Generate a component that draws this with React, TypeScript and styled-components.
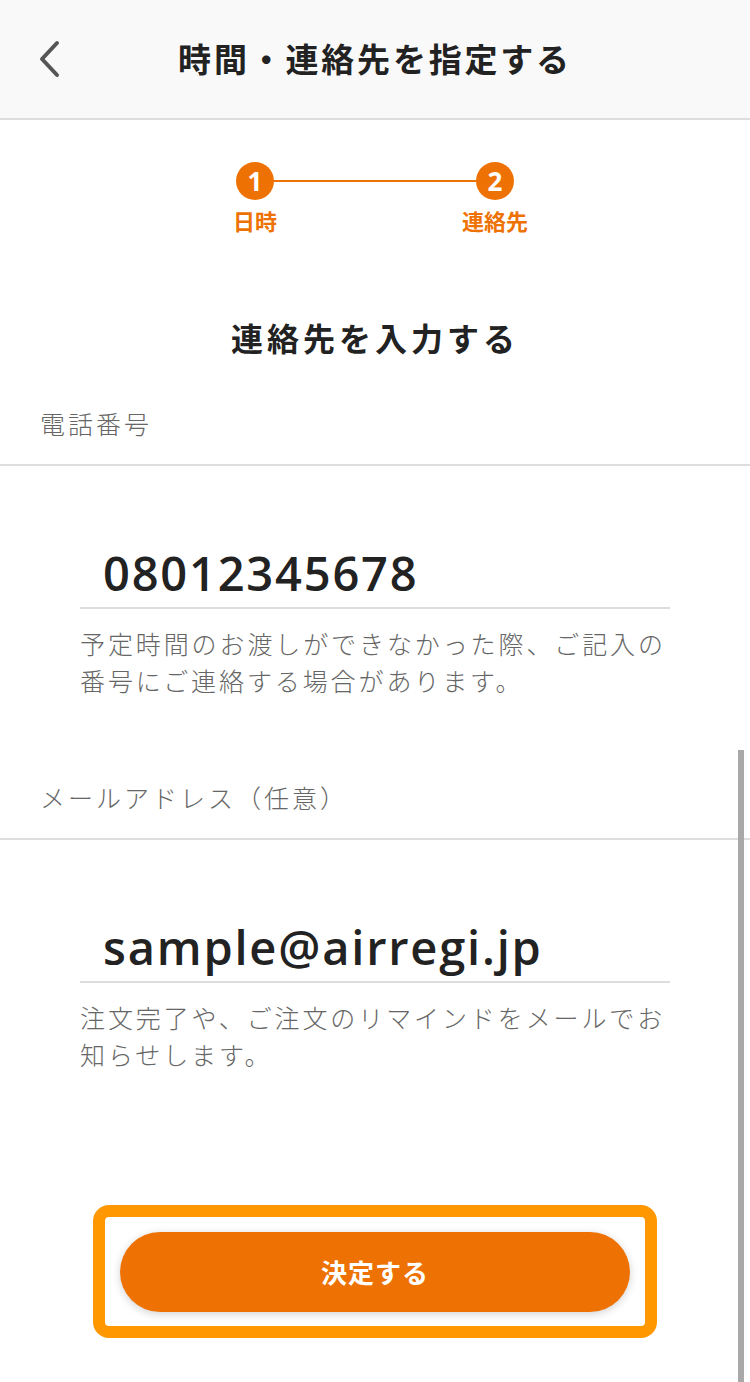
import styled, { createGlobalStyle } from 'styled-components';

const colors = {
	orange: '#ee7203',
	highlight: '#ff9800',
	text: '#222222',
	grey: '#666666',
	line: '#dddddd',
	headerBg: '#f9f9f9',
	white: '#ffffff',
};

const GlobalStyle = createGlobalStyle`
	html, body {
		margin: 0;
		padding: 0;
		background: ${colors.white};
	}
	body {
		font-family: 'Noto Sans', 'Noto Sans CJK JP', sans-serif;
	}
`;

const Page = styled.div`
	position: relative;
	display: flex;
	flex-direction: column;
	width: 750px;
	height: 1382px;
	overflow: hidden;
	background: ${colors.white};
`;

const Header = styled.header`
	display: grid;
	grid-template-columns: 100px 1fr 100px;
	align-items: center;
	height: 118px;
	background: ${colors.headerBg};
	border-bottom: 2px solid ${colors.line};
`;

const BackButton = styled.button`
	display: flex;
	align-items: center;
	justify-content: flex-start;
	padding: 0 0 0 36px;
	height: 100%;
	background: none;
	border: none;
`;

const HeaderTitle = styled.h1`
	margin: 0;
	text-align: center;
	color: ${colors.text};
	font-size: 33px;
	font-weight: 700;
	letter-spacing: 2.8px;
	line-height: 1;
`;

const Stepper = styled.div`
	display: grid;
	grid-template-columns: 80px 160px 80px;
	justify-content: center;
	justify-items: center;
	padding-top: 42px;
`;

const StepCircle = styled.div`
	display: flex;
	align-items: center;
	justify-content: center;
	width: 38px;
	height: 38px;
	border-radius: 50%;
	background: ${colors.orange};
	color: ${colors.white};
	font-size: 26px;
	font-weight: 700;
	font-family: 'Open Sans', 'Noto Sans', sans-serif;
`;

const StepLine = styled.div`
	align-self: center;
	width: calc(100% + 44px);
	height: 2px;
	background: ${colors.orange};
`;

const StepLabel = styled.span`
	margin-top: 8px;
	color: ${colors.orange};
	font-size: 22px;
	font-weight: 700;
	line-height: 26px;
	white-space: nowrap;
`;

const Heading = styled.h2`
	margin: 81px 0 0;
	text-align: center;
	color: ${colors.text};
	font-size: 32px;
	font-weight: 700;
	letter-spacing: 4px;
	line-height: 48px;
`;

const FieldLabel = styled.div<{ $top: number }>`
	padding: ${(p) => p.$top}px 40px 22px;
	border-bottom: 2px solid ${colors.line};
	color: ${colors.grey};
	font-size: 25px;
	font-weight: 300;
	letter-spacing: 3px;
	line-height: 36px;
`;

const FieldBody = styled.div`
	margin: 72px 80px 0;
`;

const ValueInput = styled.input`
	display: block;
	box-sizing: border-box;
	width: 100%;
	height: 71px;
	padding: 0 0 0 23px;
	border: none;
	border-bottom: 2px solid ${colors.line};
	outline: none;
	background: transparent;
	color: ${colors.text};
	font-family: 'Open Sans', 'Noto Sans', sans-serif;
	font-size: 47px;
	font-weight: 600;
	letter-spacing: 1.8px;
`;

const HelpText = styled.p`
	margin: 17px 0 0;
	color: ${colors.grey};
	font-size: 25px;
	font-weight: 300;
	letter-spacing: 2.9px;
	line-height: 37px;
	white-space: nowrap;
`;

const Footer = styled.div`
	display: flex;
	justify-content: center;
	margin-top: auto;
	padding-bottom: 44px;
`;

const HighlightFrame = styled.div`
	box-sizing: border-box;
	width: 564px;
	padding: 15px 15px 14px;
	border: 12px solid ${colors.highlight};
	border-radius: 16px;
	background: ${colors.white};
`;

const SubmitButton = styled.button`
	display: block;
	width: 100%;
	height: 80px;
	border: none;
	border-radius: 40px;
	background: ${colors.orange};
	box-shadow: 0 2px 8px rgba(0, 0, 0, 0.18);
	color: ${colors.white};
	font-family: 'Noto Sans', 'Noto Sans CJK JP', sans-serif;
	font-size: 26px;
	font-weight: 700;
	letter-spacing: 1px;
`;

const Scrollbar = styled.div`
	position: absolute;
	top: 750px;
	right: 6px;
	width: 6px;
	bottom: 0;
	background: #a8a8a8;
`;

const App = () => {
	return (
		<Page>
			<GlobalStyle />
			<Header>
				<BackButton aria-label='戻る'>
					<svg width='28' height='40' viewBox='0 0 28 40'>
						<polyline
							points='21,4 6,20 21,36'
							fill='none'
							stroke='#555'
							strokeWidth='4'
							strokeLinecap='round'
							strokeLinejoin='round'
						/>
					</svg>
				</BackButton>
				<HeaderTitle>時間・連絡先を指定する</HeaderTitle>
				<div />
			</Header>

			<Stepper>
				<StepCircle>1</StepCircle>
				<StepLine />
				<StepCircle>2</StepCircle>
				<StepLabel>日時</StepLabel>
				<div />
				<StepLabel>連絡先</StepLabel>
			</Stepper>

			<Heading>連絡先を入力する</Heading>

			<FieldLabel $top={43}>電話番号</FieldLabel>
			<FieldBody>
				<ValueInput type='tel' defaultValue='08012345678' />
				<HelpText>
					予定時間のお渡しができなかった際、ご記入の
					<br />
					番号にご連絡する場合があります。
				</HelpText>
			</FieldBody>

			<FieldLabel $top={80}>メールアドレス（任意）</FieldLabel>
			<FieldBody>
				<ValueInput type='email' defaultValue='sample@airregi.jp' />
				<HelpText>
					注文完了や、ご注文のリマインドをメールでお
					<br />
					知らせします。
				</HelpText>
			</FieldBody>

			<Footer>
				<HighlightFrame>
					<SubmitButton>決定する</SubmitButton>
				</HighlightFrame>
			</Footer>

			<Scrollbar />
		</Page>
	);
};

export default App;
